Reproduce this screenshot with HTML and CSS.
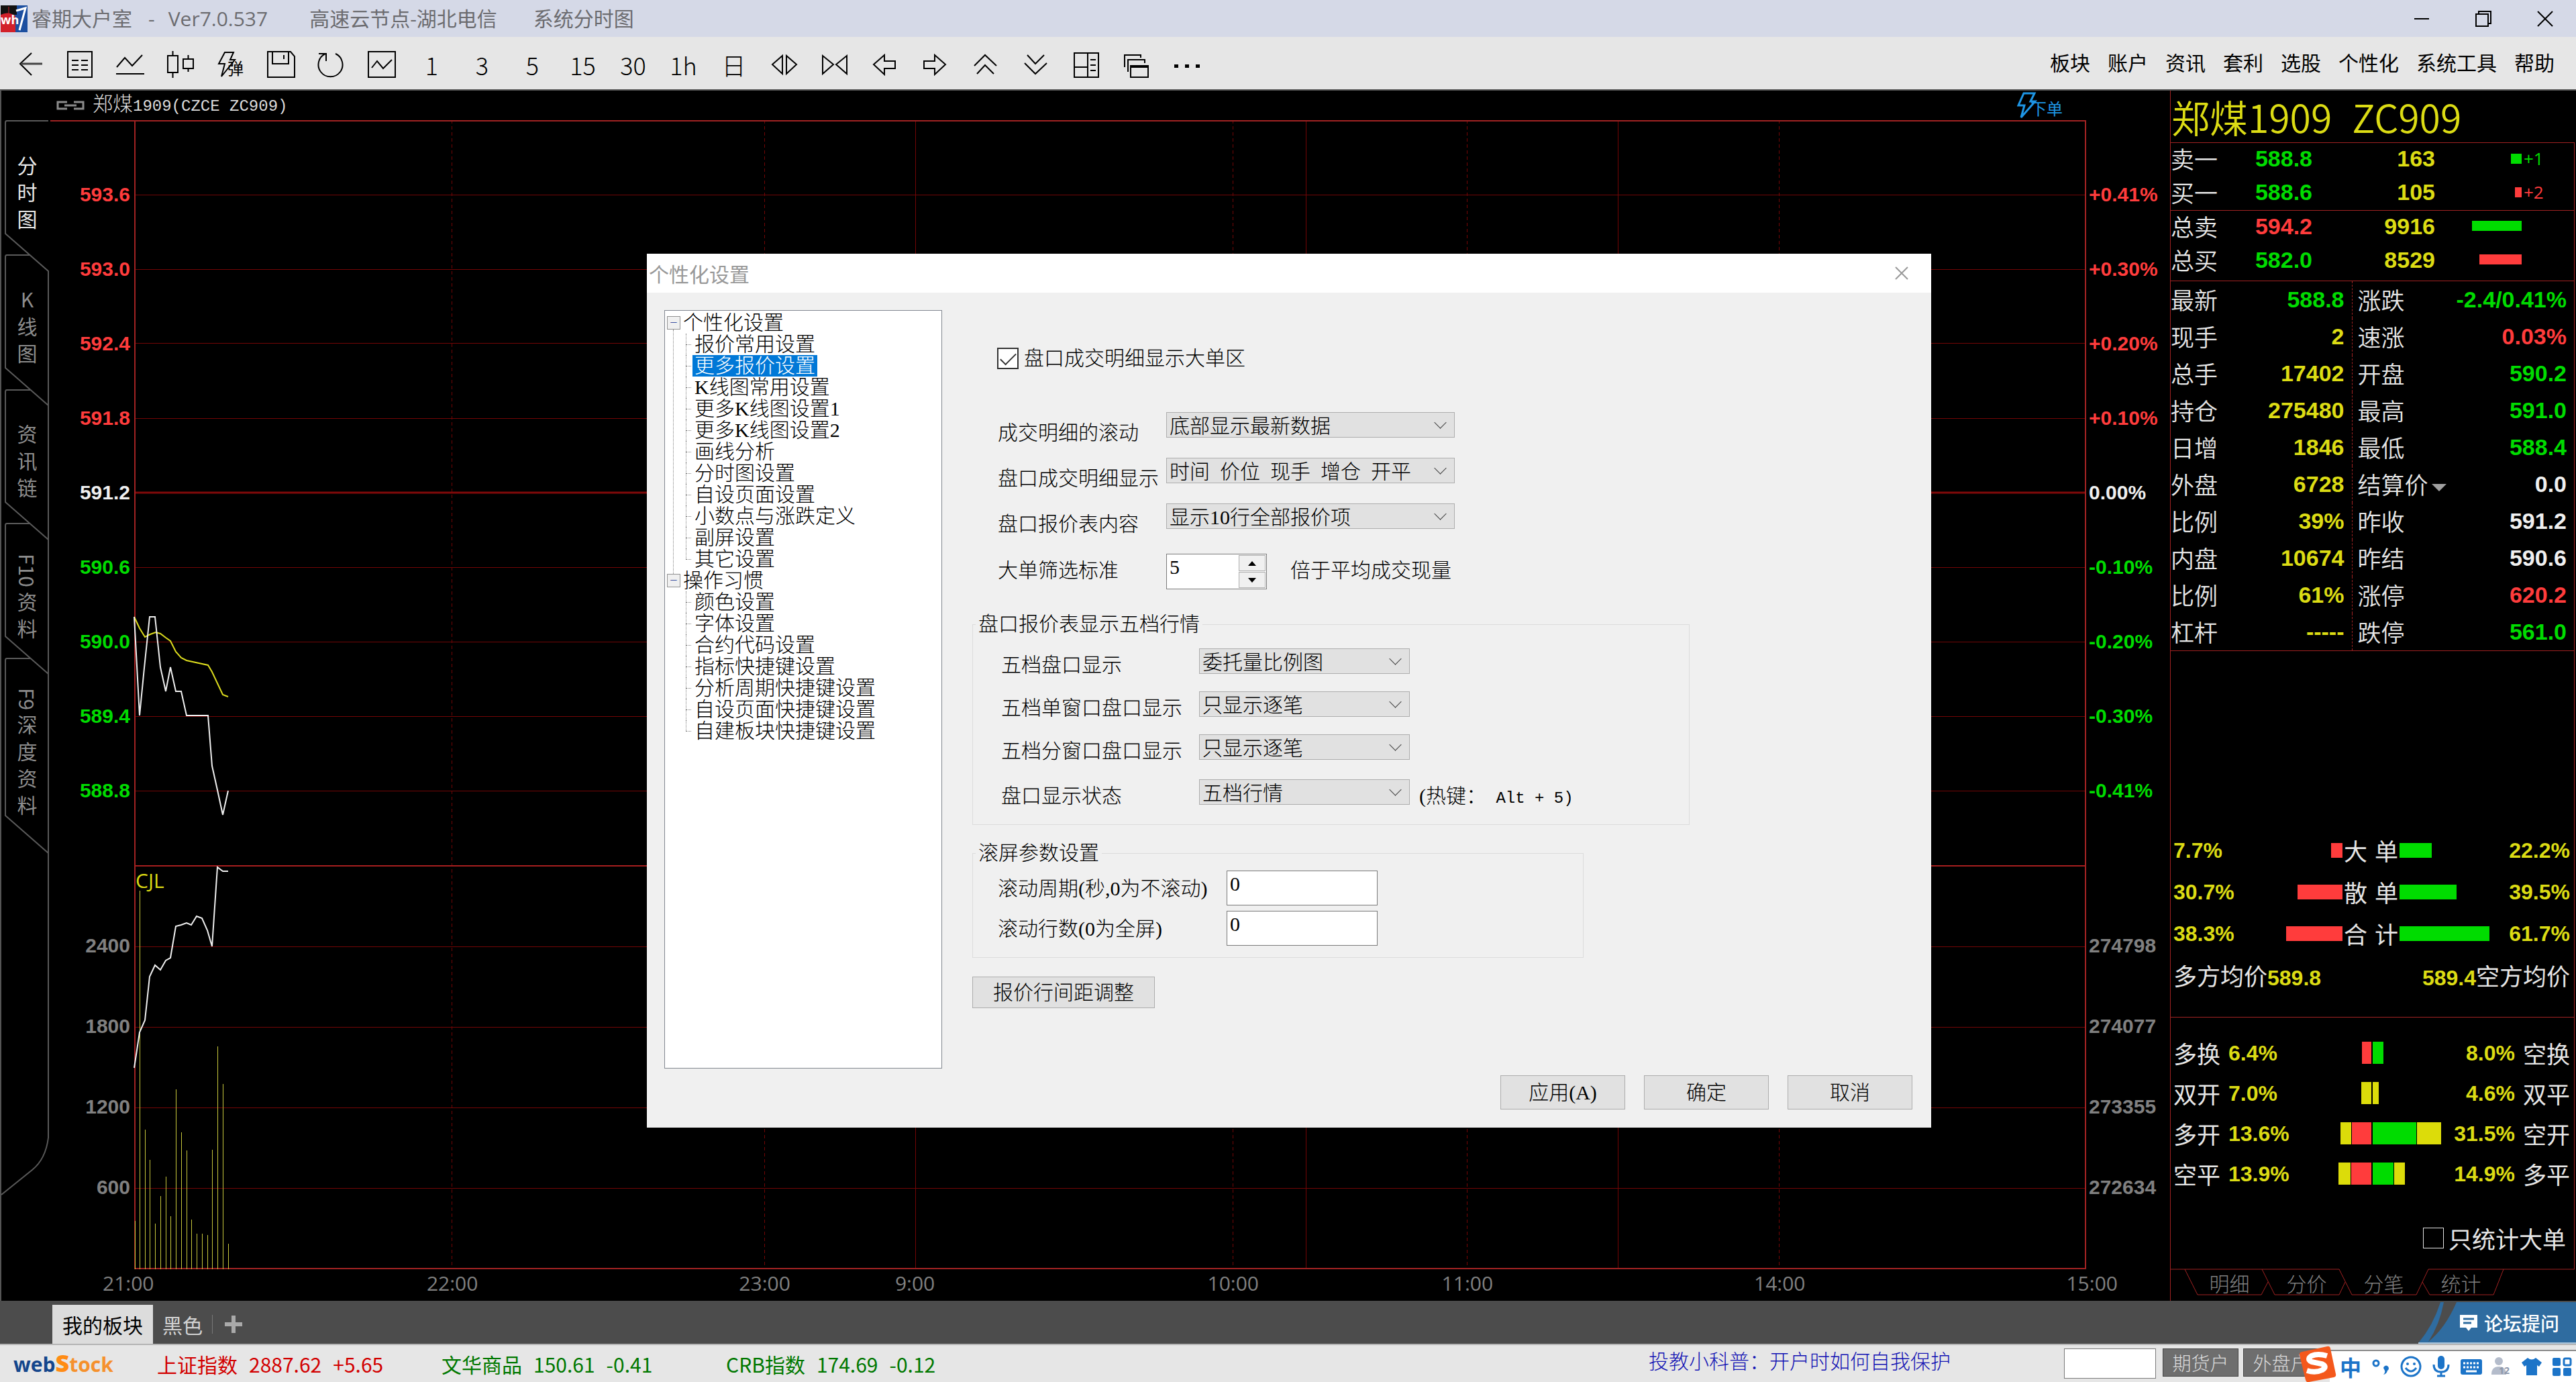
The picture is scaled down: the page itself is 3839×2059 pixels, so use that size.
FILE: index.html
```html
<!DOCTYPE html>
<html lang="zh-CN">
<head>
    <meta charset="UTF-8">
    <meta name="viewport" content="width=device-width, initial-scale=1.0">
    <title>睿期大户室 - Ver7.0.537</title>
    <link rel="stylesheet" href="styles.css">
</head>
<body>
    <header class="titlebar">
        <svg class="app-icon" viewBox="0 0 40 40">
            <rect width="40" height="40" fill="#1c4fa0"/>
            <path d="M0 0h24v14H0z" fill="#111"/>
            <path d="M0 14q12-6 22 2v24H0z" fill="#d2202a"/>
            <path d="M12 2v12" stroke="#d2202a" stroke-width="1"/>
            <path d="M23 8l14-4-9 33" fill="none" stroke="#fff" stroke-width="3"/>
            <text x="0" y="28" class="app-icon-text">wh</text>
        </svg>
        <span class="t-name">睿期大户室</span>
        <span class="t-dash">-</span>
        <span class="t-ver">Ver7.0.537</span>
        <span class="t-node">高速云节点-湖北电信</span>
        <span>系统分时图</span>
        <div class="win-buttons">
            <button aria-label="最小化"><svg viewBox="0 0 24 24"><path d="M1 12h22"/></svg></button>
            <button aria-label="还原"><svg viewBox="0 0 24 24"><path d="M1 5h18v18H1zM5 5V1h18v18h-4"/></svg></button>
            <button aria-label="关闭"><svg viewBox="0 0 24 24"><path d="M1 1l22 22M23 1L1 23"/></svg></button>
        </div>
    </header>

    <nav class="toolbar">
        <div class="tools">
            <button aria-label="返回"><svg viewBox="0 0 44 44"><path d="M25 5L8 21l17 17"/><path d="M9 21h32" stroke="#444" stroke-width="3"/></svg></button>
            <button aria-label="报价"><svg viewBox="0 0 44 44"><path d="M4 3h36v38H4z"/><path d="M10 16h10M24 16h10M10 23h10M24 23h10M10 30h10M24 30h10"/></svg></button>
            <button aria-label="分时"><svg viewBox="0 0 44 44"><path d="M2 26l12-14 11 12L40 8M1 36h42"/></svg></button>
            <button aria-label="K线"><svg viewBox="0 0 44 44"><path d="M3 9h15v25H3zM10.5 2v7M10.5 34v8M26 14h15v14H26zM33.500 8v6M33.500 28v5"/></svg></button>
            <button aria-label="弹"><svg viewBox="0 0 44 44"><path d="M13 4h13l-5 11h7L8 40l5-19H4z"/></svg><span class="bolt-char">弹</span></button>
            <button aria-label="保存"><svg viewBox="0 0 44 44"><path d="M2 3h34l6 7v31H2zM9 3v18h24V3M26 8v6"/></svg></button>
            <button aria-label="刷新"><svg viewBox="0 0 44 44"><path d="M13 6A18 18 0 1 0 28 6M3 6h11v11"/></svg></button>
            <button aria-label="画线"><svg viewBox="0 0 44 44"><path d="M2 3h40v38H2z"/><path d="M7 27l8-10 9 11 13-13"/></svg></button>
            <button>1</button>
            <button>3</button>
            <button>5</button>
            <button>15</button>
            <button>30</button>
            <button>1h</button>
            <button>日</button>
            <button aria-label="缩小"><svg viewBox="0 0 44 44"><path d="M19 9v27L4 22zM25 9v27l15-14z"/></svg></button>
            <button aria-label="放大"><svg viewBox="0 0 44 44"><path d="M4 9v27l16-14zM40 9v27L24 22z"/></svg></button>
            <button aria-label="左移"><svg viewBox="0 0 44 44"><path d="M21 8L5 22l16 15V28h16V17H21z"/></svg></button>
            <button aria-label="右移"><svg viewBox="0 0 44 44"><path d="M21 8l16 14-16 15V28H5V17h16z"/></svg></button>
            <button aria-label="上翻"><svg viewBox="0 0 44 44"><path d="M5 24L21 8l17 16M9 36l12-13 13 13"/></svg></button>
            <button aria-label="下翻"><svg viewBox="0 0 44 44"><path d="M9 8l12 13L34 8M5 20l16 16 17-16"/></svg></button>
            <button aria-label="布局"><svg viewBox="0 0 44 44"><path d="M4 5h36v36H4zM24 5v36M4 26h20M28 15h8M28 23h8M28 31h8"/></svg></button>
            <button aria-label="窗口"><svg viewBox="0 0 44 44"><path d="M13 24h26v17H13zM13 26h26M4 26V8h24v4M9 33V15h25v5"/></svg></button>
            <button aria-label="更多"><svg viewBox="0 0 44 44"><path d="M3 22h6v5H3zM19 22h6v5h-6zM35 22h6v5h-6z" fill="#000" stroke="none"/></svg></button>
        </div>
        <div class="menu">
            <a href="#">板块</a>
            <a href="#">账户</a>
            <a href="#">资讯</a>
            <a href="#">套利</a>
            <a href="#">选股</a>
            <a href="#">个性化</a>
            <a href="#">系统工具</a>
            <a href="#">帮助</a>
        </div>
    </nav>

    <main>
        <aside class="side">
            <svg class="side-lines" viewBox="0 0 75 1803">
                <path d="M72 45H10q-2 0-2 3v165l64 56V1560M45 245H10q-2 0-2 3v165l64 56M45 446H10q-2 0-2 3v164l64 56M45 645H10q-2 0-2 3v165l64 56M45 846H10q-2 0-2 3v231l64 56M72 1560q-4 32-24 48L2 1645"/>
            </svg>
            <button class="active">分<br>时<br>图</button>
            <button>K<br>线<br>图</button>
            <button>资<br>讯<br>链</button>
            <button><span class="vert">F10</span>资<br>料</button>
            <button><span class="vert">F9</span>深<br>度<br>资<br>料</button>
        </aside>

        <section class="chart">
            <div class="chart-head">
                <svg class="link-icon" viewBox="0 0 42 14"><path d="M16 2H2v10h14M26 2h14v10H26M12 7h18"/></svg>
                <span>郑煤<span class="mono">1909(CZCE ZC909)</span></span>
                <button class="order">
                    <svg viewBox="0 0 30 40"><path d="M10 2h16l-6 12h7L6 38l5-18H2z"/></svg>
                    <span>下单</span>
                </button>
            </div>
            <div class="axis axis-left">
                <div class="axis-price">
                    <span class="red">593.6</span>
                    <span class="red">593.0</span>
                    <span class="red">592.4</span>
                    <span class="red">591.8</span>
                    <span class="white">591.2</span>
                    <span class="green">590.6</span>
                    <span class="green">590.0</span>
                    <span class="green">589.4</span>
                    <span class="green">588.8</span>
                </div>
                <div class="axis-vol">
                    <span>2400</span>
                    <span>1800</span>
                    <span>1200</span>
                    <span>600</span>
                </div>
            </div>
            <div class="plot">
                <svg viewBox="0 0 2909 1712" preserveAspectRatio="none">
                    <path class="grid-line" d="M0 111H2909M0 222H2909M0 332H2909M0 444H2909M0 666H2909M0 777H2909M0 888H2909M0 999H2909M0 1231H2909M0 1351H2909M0 1471H2909M0 1591H2909"/>
                    <path class="grid-line" d="M1164 0V1712M1746 0V1712M2211 0V1712"/>
                    <path class="grid-line dash" d="M473 0V1712M939 0V1712M1637 0V1712M1986 0V1712M2451 0V1712"/>
                    <path class="zero-line" d="M0 555H2909"/>
                    <path class="mid-line" d="M0 1111H2909"/>
                    <path class="frame" d="M1 1H2908V1711H1z"/>
                    <path class="vol-bars" d="M1 1712V1640M8 1712V1148M16 1712V1504M23 1712V1549M31 1712V1644M39 1712V1603M47 1712V1574M54 1712V1633M62 1712V1444M70 1712V1508M78 1712V1535M85 1712V1638M93 1712V1659M101 1712V1659M109 1712V1661M116 1712V1534M124 1712V1380M132 1712V1436M140 1712V1674"/>
                    <polyline class="avg" points="0,740 8,757 16,770 24,766 32,763 39,765 47,771 54,776 62,792 70,801 78,805 110,812 116,822 124,839 132,856 140,859"/>
                    <polyline class="price" points="0,740 8,887 15,816 23,740 31,740 39,815 47,851 54,815 62,851 70,851 78,887 110,887 116,962 124,998 132,1035 140,999"/>
                    <polyline class="price" points="0,1412 8,1359 16,1341 23,1276 31,1259 39,1266 47,1252 54,1248 62,1201 70,1199 78,1196 85,1199 93,1186 101,1189 109,1207 116,1231 124,1113 132,1119 140,1119"/>
                </svg>
                <span class="cjl">CJL</span>
            </div>
            <div class="axis axis-right">
                <div class="axis-price">
                    <span class="red">+0.41%</span>
                    <span class="red">+0.30%</span>
                    <span class="red">+0.20%</span>
                    <span class="red">+0.10%</span>
                    <span class="white">0.00%</span>
                    <span class="green">-0.10%</span>
                    <span class="green">-0.20%</span>
                    <span class="green">-0.30%</span>
                    <span class="green">-0.41%</span>
                </div>
                <div class="axis-vol">
                    <span>274798</span>
                    <span>274077</span>
                    <span>273355</span>
                    <span>272634</span>
                </div>
            </div>
            <div class="times">
                <span style="left: -0.3%">21:00</span>
                <span style="left: 16.3%">22:00</span>
                <span style="left: 32.3%">23:00</span>
                <span style="left: 40%">9:00</span>
                <span style="left: 56.3%">10:00</span>
                <span style="left: 68.3%">11:00</span>
                <span style="left: 84.3%">14:00</span>
                <span style="left: 100.3%">15:00</span>
            </div>
        </section>

        <aside class="panel">
            <h1><span>郑煤1909</span><span>ZC909</span></h1>
            <div class="panel-body">
                <table class="orders">
                    <tr><th>卖一</th><td class="green">588.8</td><td>163</td><td><div class="depth green"><div><i class="g" style="width: 16px"></i></div>+1</div></td></tr>
                    <tr><th>买一</th><td class="green">588.6</td><td>105</td><td><div class="depth red"><div><i class="r" style="width: 10px"></i></div>+2</div></td></tr>
                </table>
                <table class="orders totals">
                    <tr><th>总卖</th><td class="red">594.2</td><td>9916</td><td><div class="depth"><div><i class="g" style="width: 74px"></i></div></div></td></tr>
                    <tr><th>总买</th><td class="green">582.0</td><td>8529</td><td><div class="depth"><div><i class="r" style="width: 63px"></i></div></div></td></tr>
                </table>
                <table class="quotes">
                    <tr><th>最新</th><td class="green">588.8</td><th>涨跌</th><td class="green">-2.4/0.41%</td></tr>
                    <tr><th>现手</th><td>2</td><th>速涨</th><td class="red">0.03%</td></tr>
                    <tr><th>总手</th><td>17402</td><th>开盘</th><td class="green">590.2</td></tr>
                    <tr><th>持仓</th><td>275480</td><th>最高</th><td class="green">591.0</td></tr>
                    <tr><th>日增</th><td>1846</td><th>最低</th><td class="green">588.4</td></tr>
                    <tr><th>外盘</th><td>6728</td><th>结算价<i class="tri"></i></th><td class="white">0.0</td></tr>
                    <tr><th>比例</th><td>39%</td><th>昨收</th><td class="white">591.2</td></tr>
                    <tr><th>内盘</th><td>10674</td><th>昨结</th><td class="white">590.6</td></tr>
                    <tr><th>比例</th><td>61%</td><th>涨停</th><td class="red">620.2</td></tr>
                    <tr><th>杠杆</th><td>-----</td><th>跌停</th><td class="green">561.0</td></tr>
                </table>
                <div class="flow">
                    <div class="flow-row"><b>7.7%</b><div class="bar-l"><i class="r" style="width: 17px"></i></div><span class="flow-name"><span>大</span><span>单</span></span><div class="bar-r"><i class="g" style="width: 48px"></i></div><b>22.2%</b></div>
                    <div class="flow-row"><b>30.7%</b><div class="bar-l"><i class="r" style="width: 67px"></i></div><span class="flow-name"><span>散</span><span>单</span></span><div class="bar-r"><i class="g" style="width: 85px"></i></div><b>39.5%</b></div>
                    <div class="flow-row"><b>38.3%</b><div class="bar-l"><i class="r" style="width: 84px"></i></div><span class="flow-name"><span>合</span><span>计</span></span><div class="bar-r"><i class="g" style="width: 134px"></i></div><b>61.7%</b></div>
                    <div class="flow-avg"><span>多方均价<b>589.8</b></span><span><b>589.4</b>空方均价</span></div>
                </div>
                <div class="detail">
                    <div class="detail-row"><span>多换</span><b>6.4%</b><div class="pair-l"><i class="r" style="width: 14px"></i></div><div class="pair-r"><i class="g" style="width: 16px"></i></div><b>8.0%</b><span>空换</span></div>
                    <div class="detail-row"><span>双开</span><b>7.0%</b><div class="pair-l"><i class="y" style="width: 15px"></i></div><div class="pair-r"><i class="y" style="width: 9px"></i></div><b>4.6%</b><span>双平</span></div>
                    <div class="detail-row"><span>多开</span><b>13.6%</b><div class="pair-l"><i class="y" style="width: 16px"></i><i class="r" style="width: 29px"></i></div><div class="pair-r"><i class="g" style="width: 65px"></i><i class="y" style="width: 36px"></i></div><b>31.5%</b><span>空开</span></div>
                    <div class="detail-row"><span>空平</span><b>13.9%</b><div class="pair-l"><i class="y" style="width: 18px"></i><i class="r" style="width: 30px"></i></div><div class="pair-r"><i class="g" style="width: 31px"></i><i class="y" style="width: 16px"></i></div><b>14.9%</b><span>多平</span></div>
                    <label class="only-big"><input type="checkbox">只统计大单</label>
                </div>
            </div>
            <div class="panel-tabs">
                <svg viewBox="0 0 605 47"><path d="M0 1h251M384 1h218M21 1l19 38h95l10-19M136 1l19 38h96l9-19M251 1l19 38h96L384 1M375 20l11 19h95l15-38"/></svg>
                <button>明细</button>
                <button>分价</button>
                <button>分笔</button>
                <button>统计</button>
            </div>
        </aside>
    </main>

    <div class="boards">
        <button class="active">我的板块</button>
        <button>黑色</button>
        <button class="add" aria-label="新建板块"><svg viewBox="0 0 26 26"><path d="M13 0v26M0 13h26"/></svg></button>
        <a class="forum" href="#">
            <svg class="forum-bg" viewBox="0 0 235 60" preserveAspectRatio="none">
                <path d="M38 0h-5Q22 34 0 59h235V0H57Q40 38 15 57 32 32 38 0z" fill="#2f6ca0"/>
                <path d="M0 59h235" stroke="#a9c4da" stroke-width="2"/>
            </svg>
            <svg class="forum-icon" viewBox="0 0 28 26"><path d="M1 1h26v19h-9l-4 5-4-5H1z" fill="#fff"/><path d="M6 7h16M6 13h12" stroke="#2f6ca0" stroke-width="3"/></svg>
            <span>论坛提问</span>
        </a>
    </div>

    <footer class="status">
        <div class="logo"><span>web</span><b>S</b><em>tock</em></div>
        <div class="idx red-idx"><span>上证指数</span><span>2887.62</span><span>+5.65</span></div>
        <div class="idx"><span>文华商品</span><span>150.61</span><span>-0.41</span></div>
        <div class="idx"><span>CRB指数</span><span>174.69</span><span>-0.12</span></div>
        <a class="news" href="#">投教小科普：开户时如何自我保护</a>
        <input type="text" aria-label="代码">
        <button>期货户</button>
        <button>外盘户</button>
    </footer>

    <div class="ime">
        <svg class="ime-logo" viewBox="0 0 56 54">
            <path d="M5 9L42 1q4-1 5 3l8 38q1 4-3 5l-37 7q-4 1-5-3L1 14q-1-4 4-5z" fill="#f4581c"/>
            <path d="M42 15q-14-4-23 0-8 5 0 9l15 3q9 4 1 9-10 5-23 1" fill="none" stroke="#fff" stroke-width="8"/>
        </svg>
        <div class="ime-bar">
            <span>中</span>
            <svg viewBox="0 0 32 32"><circle cx="9" cy="11" r="4" fill="none" stroke="#1c74c8" stroke-width="3"/><path d="M20 18a4 4 0 1 1 6 4q-1 5-6 6 3-3 2-6z"/></svg>
            <svg viewBox="0 0 32 32"><circle cx="16" cy="16" r="14" fill="none" stroke="#1c74c8" stroke-width="3"/><circle cx="11" cy="12" r="2"/><circle cx="21" cy="12" r="2"/><path d="M8 18q8 10 16 0" fill="none" stroke="#1c74c8" stroke-width="3"/></svg>
            <svg viewBox="0 0 32 32"><rect x="11" y="0" width="10" height="20" rx="5"/><path d="M5 13q0 11 11 11t11-11M16 24v6M10 30h12" fill="none" stroke="#1c74c8" stroke-width="3"/></svg>
            <svg viewBox="0 0 32 32"><rect x="0" y="5" width="32" height="23" rx="3"/><path d="M4 11h24M4 17h24" stroke="#fff" stroke-width="3" stroke-dasharray="3 2"/><path d="M8 23h16" stroke="#fff" stroke-width="3"/></svg>
            <svg viewBox="0 0 32 32"><g fill="#b4bccb"><circle cx="12" cy="8" r="6"/><path d="M1 28q0-12 11-12t11 12z"/></g><text x="12" y="27" class="ime-num">12</text></svg>
            <svg viewBox="0 0 32 32"><path d="M10 3q6 5 12 0l9 7-4 6-3-2v15H8V14l-3 2-4-6z"/></svg>
            <svg viewBox="0 0 32 32"><rect x="2" y="3" width="12" height="12" rx="2"/><rect x="2" y="18" width="12" height="12" rx="2"/><rect x="18" y="18" width="12" height="12" rx="2"/><rect x="19" y="4" width="10" height="10" rx="2" fill="none" stroke="#1c74c8" stroke-width="3"/></svg>
        </div>
    </div>

    <div class="dialog" role="dialog" aria-labelledby="dlg-title">
        <div class="dialog-title">
            <span id="dlg-title">个性化设置</span>
            <button aria-label="关闭"><svg viewBox="0 0 20 20"><path d="M1 1l18 18M19 1L1 19"/></svg></button>
        </div>
        <div class="dialog-body">
            <ul class="tree">
                <li><span class="node">个性化设置</span>
                    <ul>
                        <li><span>报价常用设置</span></li>
                        <li><span class="selected">更多报价设置</span></li>
                        <li><span>K线图常用设置</span></li>
                        <li><span>更多K线图设置1</span></li>
                        <li><span>更多K线图设置2</span></li>
                        <li><span>画线分析</span></li>
                        <li><span>分时图设置</span></li>
                        <li><span>自设页面设置</span></li>
                        <li><span>小数点与涨跌定义</span></li>
                        <li><span>副屏设置</span></li>
                        <li><span>其它设置</span></li>
                    </ul>
                </li>
                <li><span class="node">操作习惯</span>
                    <ul>
                        <li><span>颜色设置</span></li>
                        <li><span>字体设置</span></li>
                        <li><span>合约代码设置</span></li>
                        <li><span>指标快捷键设置</span></li>
                        <li><span>分析周期快捷键设置</span></li>
                        <li><span>自设页面快捷键设置</span></li>
                        <li><span>自建板块快捷键设置</span></li>
                    </ul>
                </li>
            </ul>

            <form class="settings">
                <label class="check"><input type="checkbox" checked>盘口成交明细显示大单区</label>

                <div class="rows">
                    <div class="row">
                        <label for="scroll">成交明细的滚动</label>
                        <div class="select"><select id="scroll"><option>底部显示最新数据</option></select></div>
                    </div>
                    <div class="row">
                        <label for="columns">盘口成交明细显示</label>
                        <div class="select"><select id="columns"><option>时间&nbsp; 价位&nbsp; 现手&nbsp; 增仓&nbsp; 开平</option></select></div>
                    </div>
                    <div class="row">
                        <label for="content">盘口报价表内容</label>
                        <div class="select"><select id="content"><option>显示10行全部报价项</option></select></div>
                    </div>
                    <div class="row">
                        <label for="filter">大单筛选标准</label>
                        <div class="spin">
                            <input type="text" id="filter" value="5">
                            <div class="spin-btns">
                                <button type="button" aria-label="加"><i class="up"></i></button>
                                <button type="button" aria-label="减"><i class="down"></i></button>
                            </div>
                        </div>
                        <span class="unit">倍于平均成交现量</span>
                    </div>
                </div>

                <fieldset class="five">
                    <legend>盘口报价表显示五档行情</legend>
                    <div class="row">
                        <label for="five1">五档盘口显示</label>
                        <div class="select"><select id="five1"><option>委托量比例图</option></select></div>
                    </div>
                    <div class="row">
                        <label for="five2">五档单窗口盘口显示</label>
                        <div class="select"><select id="five2"><option>只显示逐笔</option></select></div>
                    </div>
                    <div class="row">
                        <label for="five3">五档分窗口盘口显示</label>
                        <div class="select"><select id="five3"><option>只显示逐笔</option></select></div>
                    </div>
                    <div class="row">
                        <label for="five4">盘口显示状态</label>
                        <div class="select"><select id="five4"><option>五档行情</option></select></div>
                        <span class="hotkey">(热键：<span class="mono"> Alt + 5)</span></span>
                    </div>
                </fieldset>

                <fieldset class="scrolling">
                    <legend>滚屏参数设置</legend>
                    <div class="row">
                        <label for="period">滚动周期(秒,0为不滚动)</label>
                        <input type="text" id="period" value="0">
                    </div>
                    <div class="row">
                        <label for="lines">滚动行数(0为全屏)</label>
                        <input type="text" id="lines" value="0">
                    </div>
                </fieldset>

                <button type="button" class="btn spacing-btn">报价行间距调整</button>

                <div class="actions">
                    <button type="button" class="btn">应用(A)</button>
                    <button type="button" class="btn">确定</button>
                    <button type="button" class="btn">取消</button>
                </div>
            </form>
        </div>
    </div>
</body>
</html>
```

FILE: styles.css
```css
* {
    box-sizing: border-box;
}

body {
    margin: 0;
    min-height: 100vh;
    display: flex;
    flex-direction: column;
    position: relative;
    background-color: #000;
    font-family: "Open Sans", "Noto Sans CJK SC", sans-serif;
    font-size: 30px;
    line-height: 40px;
    overflow-x: hidden;
}

button, input, select {
    font: inherit;
    color: inherit;
    margin: 0;
    padding: 0;
    border: 0;
    border-radius: 0;
    background: none;
}

a {
    color: inherit;
    text-decoration: none;
}

i {
    display: block;
}

.red { color: #ff3c3c; }
.green { color: #00dc00; }
.white { color: #f0f0f0; }

.r { background-color: #ff3c3c; }
.g { background-color: #00dc00; }
.y { background-color: #dcdc0a; }

.mono {
    font-family: "Liberation Mono", monospace;
    font-size: 24px;
}

/* title bar */
.titlebar {
    display: flex;
    align-items: center;
    height: 55px;
    background-color: #d5d9e7;
    color: #6c6c70;
    white-space: nowrap;
}

.app-icon {
    width: 40px;
    height: 40px;
    margin: 0 6px 0 1px;
}

.app-icon-text {
    font: bold 18px "Open Sans", sans-serif;
    fill: #fff;
}

.t-name { margin-right: 24px; }
.t-dash { margin-right: 20px; }
.t-ver { margin-right: 62px; }
.t-node { margin-right: 54px; }

.win-buttons {
    margin-left: auto;
    display: flex;
}

.win-buttons button {
    width: 92px;
    height: 55px;
    display: flex;
    align-items: center;
    justify-content: center;
}

.win-buttons svg {
    width: 24px;
    height: 24px;
    fill: none;
    stroke: #000;
    stroke-width: 2;
}

/* toolbar */
.toolbar {
    display: flex;
    justify-content: space-between;
    align-items: center;
    height: 80px;
    padding: 0 32px 0 6px;
    background-color: #e6e6e6;
    border-bottom: 2px solid #555;
}

.tools {
    display: flex;
}

.tools button {
    position: relative;
    width: 75px;
    height: 78px;
    padding-top: 3px;
    display: flex;
    align-items: center;
    justify-content: center;
    font-family: "Noto Sans CJK SC", sans-serif;
    font-size: 36px;
    font-weight: 300;
}

.tools svg {
    width: 44px;
    height: 44px;
    fill: none;
    stroke: #000;
    stroke-width: 2;
}

.bolt-char {
    position: absolute;
    left: 33px;
    top: 26px;
    font-size: 24px;
    font-weight: 400;
}

.menu {
    display: flex;
    gap: 26px;
}

/* main area */
main {
    flex: 1;
    display: flex;
}

.side {
    position: relative;
    width: 75px;
    padding-top: 45px;
    border-left: 2px solid #555;
}

.side button {
    position: relative;
    width: 100%;
    height: 200px;
    padding: 45px 0 0 4px;
    display: flex;
    flex-direction: column;
    align-items: center;
    justify-content: flex-start;
    font-family: "Noto Sans CJK SC", sans-serif;
    color: #8c8c8c;
}

.side .active {
    color: #e6e6e6;
}

.side .vert {
    writing-mode: vertical-rl;
    line-height: 30px;
}

.side-lines {
    position: absolute;
    left: -2px;
    top: 0;
    width: 75px;
    height: 1803px;
    fill: none;
    stroke: #5a5a5a;
    stroke-width: 2;
}

/* chart */
.chart {
    flex: 1;
    display: grid;
    grid-template-columns: 125px 1fr 125px;
    grid-template-rows: 44px auto 47px;
}

.chart-head {
    grid-column: 1 / 4;
    display: flex;
    align-items: center;
    padding-left: 9px;
    color: #dcdcdc;
    font-family: "Liberation Serif", "Noto Sans CJK SC", serif;
    font-weight: 300;
}

.link-icon {
    width: 42px;
    height: 14px;
    margin-right: 12px;
    fill: none;
    stroke: #8c8c8c;
    stroke-width: 3;
}

.order {
    display: flex;
    align-items: center;
    margin-left: auto;
    margin-right: 160px;
    color: #1e96e6;
    font-family: "Noto Sans CJK SC", sans-serif;
    font-size: 24px;
    font-weight: 400;
}

.order svg {
    width: 30px;
    height: 40px;
    margin-right: -10px;
    fill: none;
    stroke: #1e96e6;
    stroke-width: 3;
}

.order span {
    padding-top: 8px;
}

.axis {
    font-family: "Liberation Sans", sans-serif;
    font-weight: bold;
    color: #808080;
}

.axis span {
    display: block;
}

.axis-left {
    text-align: right;
    padding-right: 6px;
    background: linear-gradient(#a02222, #a02222) no-repeat;
    background-size: 100% 2px;
}

.axis-right {
    padding-left: 4px;
}

.axis-price {
    padding: 55px 0 56px;
    line-height: 111px;
}

.axis-vol {
    padding: 60px 0 61px;
    line-height: 120px;
}

.plot {
    position: relative;
}

.plot svg {
    display: block;
    width: 100%;
    height: 100%;
    overflow: visible;
    fill: none;
}

.frame {
    stroke: #a02222;
    stroke-width: 2;
}

.grid-line {
    stroke: #730505;
    stroke-width: 1;
    shape-rendering: crispEdges;
}

.dash {
    stroke-dasharray: 5 4;
}

.zero-line {
    stroke: #820a0a;
    stroke-width: 3;
}

.mid-line {
    stroke: #a51e1e;
    stroke-width: 2;
}

.vol-bars {
    stroke: #c8c83c;
    stroke-width: 1;
    shape-rendering: crispEdges;
}

.avg {
    stroke: #dcdc1e;
    stroke-width: 2;
}

.price {
    stroke: #f0f0f0;
    stroke-width: 2;
}

.cjl {
    position: absolute;
    left: 2px;
    top: 65%;
    color: #dcdc14;
}

.times {
    grid-column: 2;
    position: relative;
    color: #808080;
}

.times span {
    position: absolute;
    top: 1px;
    width: 100px;
    margin-left: -50px;
    text-align: center;
}

/* quote panel */
.panel {
    width: 605px;
    display: flex;
    flex-direction: column;
    border-left: 1px solid #a02222;
    font-family: "Noto Sans CJK SC", sans-serif;
    font-size: 35px;
    color: #e6e6e6;
}

.panel h1 {
    display: flex;
    gap: 30px;
    margin: 0;
    height: 77px;
    padding-left: 1px;
    font-size: 57px;
    line-height: 76px;
    font-weight: 350;
    color: #dcdc14;
}

.panel-body {
    flex: 1;
    width: 602px;
    border-right: 1px solid #a02222;
}

.panel table {
    width: 100%;
    table-layout: fixed;
    border-collapse: collapse;
    border-top: 1px solid #a02222;
}

.panel th {
    padding: 0;
    font-weight: 350;
    text-align: left;
}

.panel td {
    padding: 0;
    font-family: "Liberation Sans", sans-serif;
    font-weight: bold;
    font-size: 34px;
    text-align: right;
    color: #dcdc14;
}

.panel td.red { color: #ff3c3c; }
.panel td.green { color: #00dc00; }
.panel td.white { color: #f0f0f0; }

.orders tr {
    height: 50px;
}

.panel .orders th,
.panel .orders td {
    padding-bottom: 3px;
}

.orders.totals {
    margin-bottom: 5px;
}

.orders th { width: 82px; }
.orders td:nth-child(2) { width: 129px; }
.orders td:nth-child(3) { width: 183px; }

.depth {
    display: flex;
    align-items: center;
    gap: 3px;
    font-family: "Open Sans", sans-serif;
    font-size: 26px;
    font-weight: 400;
}

.depth div {
    width: 129px;
    display: flex;
    justify-content: flex-end;
}

.depth i {
    height: 15px;
}

.quotes tr {
    height: 55px;
}

.quotes th:nth-child(1) { width: 90px; }

.quotes td:nth-child(2) {
    width: 180px;
    padding-right: 11px;
    border-right: 1px dashed #a02222;
}

.quotes th:nth-child(3) {
    width: 150px;
    padding-left: 8px;
    white-space: nowrap;
}

.quotes td:nth-child(4) {
    padding-right: 11px;
}

.tri {
    display: inline-block;
    margin-left: 5px;
    vertical-align: middle;
    border: 11px solid transparent;
    border-top-color: #a0a0a0;
    border-bottom: 0;
}

.panel b {
    font-family: "Liberation Sans", sans-serif;
    font-size: 32px;
    color: #dcdc14;
}

.flow {
    border-top: 1px solid #a02222;
    padding: 266px 6px 31px 4px;
}

.flow-row {
    display: flex;
    align-items: center;
    height: 62px;
}

.flow-row b {
    width: 110px;
}

.flow-row b:last-child {
    text-align: right;
}

.flow-row i {
    height: 22px;
}

.bar-l {
    width: 142px;
    display: flex;
    justify-content: flex-end;
}

.flow-name {
    width: 85px;
    padding: 0 2px;
    display: flex;
    justify-content: space-between;
}

.bar-r {
    flex: 1;
}

.flow-avg {
    display: flex;
    justify-content: space-between;
    height: 62px;
    line-height: 62px;
}

.detail {
    border-top: 1px solid #a02222;
    padding: 23px 6px 20px 4px;
}

.detail-row {
    display: flex;
    align-items: center;
    height: 60px;
}

.detail-row b {
    width: 94px;
    margin: 0 12px;
}

.detail-row b:nth-last-child(2) {
    text-align: right;
}

.detail-row i {
    height: 33px;
}

.pair-l {
    width: 107px;
    display: flex;
    justify-content: flex-end;
    gap: 1px;
}

.pair-r {
    flex: 1;
    display: flex;
    gap: 1px;
    margin-left: 2px;
}

.only-big {
    display: flex;
    align-items: center;
    justify-content: flex-end;
    gap: 7px;
    margin: 46px 6px 0 0;
}

.only-big input {
    appearance: none;
    width: 31px;
    height: 31px;
    border: 1px solid #e6e6e6;
}

.panel-tabs {
    position: relative;
    display: flex;
    height: 47px;
    padding-left: 30px;
}

.panel-tabs svg {
    position: absolute;
    left: 0;
    top: -1px;
    width: 605px;
    height: 47px;
    fill: none;
    stroke: #a02222;
    stroke-width: 1;
}

.panel-tabs button {
    position: relative;
    width: 115px;
    height: 40px;
    font-size: 30px;
    font-weight: 300;
    line-height: 40px;
    color: #808080;
}

/* board tabs */
.boards {
    display: flex;
    align-items: stretch;
    height: 66px;
    padding: 6px 0 0 78px;
    background-color: #4c4c4c;
    border-bottom: 2px solid #b4b4b4;
    color: #d2d2d2;
    font-family: "Noto Sans CJK SC", sans-serif;
}

.boards button {
    padding: 0 14px;
}

.boards .active {
    width: 150px;
    background-color: #dcdcdc;
    color: #000;
}

.boards .add {
    margin: 15px 0;
    padding: 0 18px;
    border-left: 1px solid #777;
    display: flex;
    align-items: center;
}

.add svg {
    width: 26px;
    height: 26px;
    stroke: #aaa;
    stroke-width: 6;
}

.forum {
    position: relative;
    display: flex;
    align-items: center;
    width: 235px;
    margin: -4px 0 0 auto;
    padding-left: 61px;
    font-size: 28px;
    font-weight: 500;
    color: #fff;
}

.forum-bg {
    position: absolute;
    left: 0;
    top: 0;
    width: 100%;
    height: 100%;
}

.forum-icon {
    position: relative;
    width: 28px;
    height: 26px;
    margin-right: 9px;
}

.forum span {
    position: relative;
}

/* status bar */
.status {
    display: flex;
    align-items: center;
    height: 55px;
    padding: 0 383px 0 20px;
    background-color: #e6e6e6;
    font-family: "Noto Sans CJK SC", sans-serif;
    white-space: nowrap;
}

.logo {
    display: flex;
    align-items: baseline;
    width: 214px;
    font-family: "Open Sans", sans-serif;
    font-weight: bold;
    font-size: 30px;
    color: #14468c;
}

.logo b {
    font-size: 36px;
    color: #ff8c14;
}

.logo em {
    font-style: normal;
    color: #f5912d;
}

.idx {
    display: flex;
    gap: 17px;
    width: 424px;
    color: #007800;
}

.idx.red-idx {
    color: #d20000;
}

.news {
    margin: 0 169px 12px auto;
    color: #1414b4;
    font-weight: 300;
}

.status input {
    width: 137px;
    height: 45px;
    background-color: #fff;
    border: 1px solid #7a7a7a;
    margin-right: 10px;
}

.status button {
    width: 113px;
    height: 42px;
    margin: 0 0 4px;
    background-color: #6e6e6e;
    border: 1px solid #464646;
    color: #dcdcdc;
    font-size: 28px;
    font-weight: 300;
}

.status button:last-child {
    margin-left: 7px;
}

/* input method bar */
.ime {
    position: absolute;
    right: 0;
    bottom: 0;
    display: flex;
}

.ime-logo {
    position: relative;
    width: 56px;
    height: 54px;
}

.ime-bar {
    display: flex;
    align-items: center;
    gap: 13px;
    height: 48px;
    margin: 6px 0 0 -10px;
    padding: 0 5px 0 15px;
    background-color: #fff;
    border-top: 2px solid #8c8c8c;
    font-family: "Noto Sans CJK SC", sans-serif;
    font-weight: bold;
    font-size: 32px;
    color: #1c74c8;
}

.ime-bar svg {
    width: 32px;
    height: 32px;
    fill: #1c74c8;
}

.ime-num {
    font: bold 14px "Open Sans", sans-serif;
    fill: #8c96aa;
}

/* settings dialog */
.dialog {
    position: absolute;
    left: 964px;
    top: 378px;
    width: 1914px;
    background-color: #f0f0f0;
    color: #000;
    font-family: "Liberation Serif", "Noto Sans CJK SC", serif;
    font-weight: 300;
}

.dialog-title {
    display: flex;
    align-items: center;
    justify-content: space-between;
    height: 58px;
    padding: 0 34px 0 3px;
    background-color: #fff;
    color: #999;
    font-family: "Noto Sans CJK SC", sans-serif;
    font-weight: 400;
}

.dialog-title svg {
    display: block;
    width: 20px;
    height: 20px;
    stroke: #999;
    stroke-width: 2;
}

.dialog-body {
    display: flex;
    align-items: flex-start;
    padding: 26px 28px 27px 26px;
}

.tree {
    width: 414px;
    height: 1130px;
    margin: 0 45px 0 0;
    padding: 2px 0 0 3px;
    list-style: none;
    background-color: #fff;
    border: 1px solid #828790;
    line-height: 32px;
    white-space: nowrap;
}

.tree li {
    position: relative;
}

.tree > li:first-child::before {
    content: "";
    position: absolute;
    left: 9px;
    top: 26px;
    bottom: -6px;
    border-left: 1px dotted #808080;
}

.node {
    display: flex;
    align-items: center;
}

.node::before {
    content: "−";
    width: 18px;
    height: 18px;
    margin-right: 4px;
    border: 1px solid #919191;
    background-color: #f0f0f0;
    color: #3c50a0;
    font-size: 20px;
    line-height: 16px;
    text-align: center;
}

.tree ul {
    margin: 0;
    padding: 0 0 0 28px;
    list-style: none;
}

.tree ul li {
    display: flex;
}

.tree ul li::before {
    content: "";
    width: 8px;
    height: 16px;
    border-bottom: 1px dotted #808080;
}

.tree ul li::after {
    content: "";
    position: absolute;
    left: 0;
    top: 0;
    height: 100%;
    border-left: 1px dotted #808080;
}

.tree ul li:last-child::after {
    height: 50%;
}

.tree ul span {
    padding: 0 3px;
    margin-left: 2px;
}

.tree .selected {
    background-color: #0078d7;
    color: #fff;
}

.settings {
    flex: 1;
    padding-top: 52px;
    line-height: 40px;
    white-space: nowrap;
}

.check {
    display: flex;
    align-items: center;
    gap: 8px;
    padding-left: 37px;
}

.check input {
    appearance: none;
    width: 32px;
    height: 32px;
    border: 2px solid #333;
    background-color: #fff;
}

.check input:checked::before {
    content: "";
    display: block;
    width: 21px;
    height: 10px;
    margin: 6px 0 0 3px;
    border: solid #333;
    border-width: 0 0 2px 2px;
    transform: rotate(-45deg);
}

.row {
    display: flex;
    align-items: flex-start;
    height: 68px;
}

.rows {
    padding: 60px 0 0 38px;
}

.rows .row:nth-child(3) {
    height: 75px;
}

.rows label {
    width: 251px;
    padding-top: 11px;
}

.rows .row:last-child label,
.rows .row:last-child .unit {
    padding-top: 5px;
}

.rows .select {
    width: 430px;
}

.select {
    position: relative;
    height: 38px;
}

.select select {
    appearance: none;
    width: 100%;
    height: 38px;
    padding-left: 4px;
    background-color: #e1e1e1;
    border: 1px solid #adadad;
}

.select::after {
    content: "";
    position: absolute;
    right: 15px;
    top: 9px;
    width: 12px;
    height: 12px;
    border: solid #404040;
    border-width: 0 1px 1px 0;
    transform: rotate(45deg);
    pointer-events: none;
}

.spin {
    display: flex;
    width: 150px;
    height: 53px;
    background-color: #fff;
    border: 1px solid #7a7a7a;
}

.spin input {
    width: 106px;
    height: 38px;
    padding-left: 4px;
}

.spin-btns {
    display: flex;
    flex-direction: column;
    gap: 1px;
    width: 42px;
    padding: 1px;
    background-color: #fff;
}

.spin-btns button {
    flex: 1;
    display: flex;
    align-items: center;
    justify-content: center;
    background-color: #f0f0f0;
    border: 1px solid #adadad;
}

.up, .down {
    border: 6px solid transparent;
}

.up {
    border-top: 0;
    border-bottom: 7px solid #000;
}

.down {
    border-bottom: 0;
    border-top: 7px solid #000;
}

.unit {
    margin-left: 35px;
}

fieldset {
    margin: 0;
    padding: 0;
    border: 1px solid #dcdcdc;
}

legend {
    margin-left: 4px;
    padding: 0 4px;
    line-height: 40px;
}

.five {
    width: 1069px;
    margin-top: 17px;
    padding: 16px 0 3px;
}

.five .row {
    height: 64px;
    padding-left: 42px;
}

.five .row:nth-child(4) {
    height: 67px;
}

.five label {
    width: 295px;
    padding-top: 5px;
}

.five .select {
    width: 314px;
}

.hotkey {
    margin-left: 14px;
    padding-top: 5px;
}

.scrolling {
    width: 911px;
    margin-top: 22px;
    padding: 6px 0 9px;
}

.scrolling .row {
    height: 60px;
    padding-left: 37px;
}

.scrolling label {
    width: 341px;
    padding-top: 7px;
}

.scrolling input {
    width: 225px;
    height: 52px;
    padding: 0 0 12px 4px;
    background-color: #fff;
    border: 1px solid #7a7a7a;
}

.btn {
    width: 186px;
    height: 51px;
    background-color: #e1e1e1;
    border: 1px solid #adadad;
}

.spacing-btn {
    display: block;
    width: 272px;
    height: 47px;
    margin-top: 28px;
}

.actions {
    display: flex;
    justify-content: flex-end;
    gap: 28px;
    margin-top: 100px;
}
```
